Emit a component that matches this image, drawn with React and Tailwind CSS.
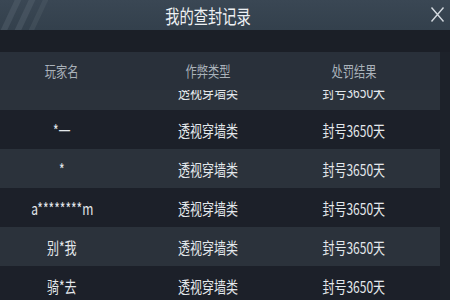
import React from "react";

const rows = [
  { name: "", type: "透视穿墙类", result: "封号3650天" },
  { name: "*一", type: "透视穿墙类", result: "封号3650天" },
  { name: "*", type: "透视穿墙类", result: "封号3650天" },
  { name: "a********m", type: "透视穿墙类", result: "封号3650天" },
  { name: "别*我", type: "透视穿墙类", result: "封号3650天" },
  { name: "骑*去", type: "透视穿墙类", result: "封号3650天" },
];

function Cell({ children, className = "" }) {
  return (
    <div className="flex items-center justify-center">
      <span className={"inline-block scale-x-75 whitespace-nowrap " + className}>{children}</span>
    </div>
  );
}

export default function App() {
  return (
    <div
      className="w-[450px] h-[300px] overflow-hidden bg-[#1d222a] flex flex-col"
      style={{ fontFamily: '"Noto Sans CJK SC", "Noto Sans", sans-serif' }}
    >
      <div className="relative h-[30px] shrink-0 bg-gradient-to-b from-[#3a4754] to-[#33404c] flex items-center justify-center overflow-hidden">
        <div className="absolute left-[8px] top-[-10px] w-[6px] h-[50px] bg-[#5a6672] opacity-40 rotate-[25deg]" />
        <div className="absolute left-[22px] top-[-10px] w-[6px] h-[50px] bg-[#5a6672] opacity-40 rotate-[25deg]" />
        <div className="absolute left-[36px] top-[-10px] w-[5px] h-[50px] bg-[#5a6672] opacity-30 rotate-[25deg]" />
        <span className="inline-block scale-x-75 text-[19px] leading-none text-[#eef1f4] ml-[-34px]">我的查封记录</span>
        <svg className="absolute right-[5px] top-[6px]" width="15" height="17" viewBox="0 0 15 17">
          <path d="M1.5 1.5 L13.5 15.5 M13.5 1.5 L1.5 15.5" stroke="#d3d9df" strokeWidth="1.4" fill="none" />
        </svg>
      </div>
      <div className="h-[22px] shrink-0 bg-[#1b1f27]" />
      <div className="w-[440px] flex flex-col flex-1 min-h-0">
        <div className="h-[38px] shrink-0 bg-[#29303a] grid grid-cols-[124px_168px_124px_1fr]">
          <Cell className="text-[15px] text-[#aab2ba]">玩家名</Cell>
          <Cell className="text-[15px] text-[#aab2ba]">作弊类型</Cell>
          <Cell className="text-[15px] text-[#aab2ba]">处罚结果</Cell>
          <div />
        </div>
        <div className="flex-1 min-h-0 overflow-hidden">
          <div className="-mt-[19px] flex flex-col">
            {rows.map((r, i) => (
              <div
                key={i}
                className={
                  "h-[39px] shrink-0 grid grid-cols-[124px_168px_124px_1fr] " +
                  (i % 2 === 0 ? "bg-[#2b323b]" : "bg-[#1c2029]")
                }
              >
                <Cell className="text-[16px] text-[#e4e8ec]">{r.name}</Cell>
                <Cell className="text-[16px] text-[#e4e8ec]">{r.type}</Cell>
                <Cell className="text-[16px] text-[#e4e8ec]">{r.result}</Cell>
                <div />
              </div>
            ))}
          </div>
        </div>
      </div>
    </div>
  );
}
